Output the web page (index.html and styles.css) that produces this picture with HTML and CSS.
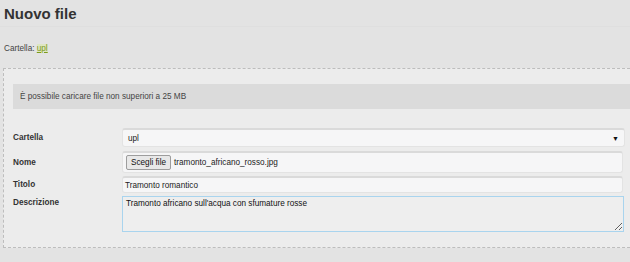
FILE: index.html
```html
<!DOCTYPE html>
<html lang="it">
<head>
    <meta charset="UTF-8">
    <meta name="viewport" content="width=device-width, initial-scale=1.0">
    <link rel="stylesheet" href="styles.css">
    <title>Nuovo file</title>
</head>
<body>
    <!-- Intestazione -->
    <h1 class="page-title">Nuovo file</h1>
    <p class="breadcrumb">Cartella: <a href="#" class="folder-link">upl</a></p>

    <!-- Modulo di caricamento -->
    <div class="upload-box">
        <div class="notice">È possibile caricare file non superiori a 25 MB</div>

        <form class="upload-form">
            <div class="row">
                <label>Cartella</label>
                <div class="field select-field">
                    <span>upl</span>
                    <span class="arrow">&#9660;</span>
                </div>
            </div>
            <div class="row">
                <label>Nome</label>
                <div class="field file-field">
                    <span class="file-btn">Scegli file</span>
                    <span>tramonto_africano_rosso.jpg</span>
                </div>
            </div>
            <div class="row row-short">
                <label>Titolo</label>
                <div class="field title-field">Tramonto romantico</div>
            </div>
            <div class="row row-top">
                <label>Descrizione</label>
                <textarea class="textarea">Tramonto africano sull'acqua con sfumature rosse</textarea>
            </div>
        </form>
    </div>
</body>
</html>
```

FILE: styles.css
```css
html, body {
    overflow: hidden;
}

body {
    font-family: 'Liberation Sans', Arial, sans-serif;
    margin: 0;
    padding: 0;
    background: #e3e3e3;
    color: #333;
    font-size: 8.2px;
}

.page-title {
    margin: 0;
    padding: 5px 4px 4px;
    font-size: 15px;
    font-weight: bold;
    color: #333;
    border-bottom: 1px solid #dfdfdf;
    line-height: 17px;
}

.breadcrumb {
    margin: 0;
    padding: 17px 4px 0;
    line-height: 10px;
    color: #444;
}

.folder-link {
    color: #7d9a1e;
    background: #dde6c2;
    text-decoration: underline;
}

.upload-box {
    margin: 14px 0 0 3px;
    width: 640px;
    background: #ececec;
    border: 1px dashed #bdbdbd;
    padding: 15px 0 15px;
}

.notice {
    margin: 0 0 0 9px;
    background: #dbdbdb;
    height: 25px;
    line-height: 25px;
    padding-left: 7px;
    color: #444;
}

.upload-form {
    padding: 19px 21px 0 9px;
    display: flex;
    flex-direction: column;
    gap: 4px;
}

.row {
    display: flex;
    align-items: center;
}

.row-short {
    margin-top: -1px;
}

.row-top {
    align-items: flex-start;
    margin-top: -1px;
}

.row label {
    width: 109px;
    flex-shrink: 0;
    font-weight: bold;
    color: #333;
}

.row-top label {
    padding-top: 2px;
}

.field {
    flex: 1;
    height: 16px;
    background: #f6f6f7;
    border: 1px solid #e3e3e3;
    border-top: 2px solid #dadada;
    border-radius: 3px;
    display: flex;
    align-items: center;
    padding: 0 5px;
    color: #222;
}

.select-field {
    justify-content: space-between;
    margin-right: -2px;
}

.arrow {
    font-size: 7px;
    color: #111;
}

.file-field {
    height: 19px;
    padding-left: 3px;
    gap: 3px;
}

.title-field {
    height: 14px;
    padding-left: 2px;
}

.file-btn {
    background: #e8e8e8;
    border: 1px solid #9d9d9d;
    border-radius: 2px;
    padding: 2px 4px;
    color: #111;
}

.textarea {
    flex: 1;
    height: 30px;
    margin: 0 -1px 0 0;
    padding: 2px 3px;
    background: #eeeeee;
    border: 1px solid #a9d4ee;
    font-family: 'Liberation Sans', Arial, sans-serif;
    font-size: 8.2px;
    color: #111;
    outline: none;
}
```
